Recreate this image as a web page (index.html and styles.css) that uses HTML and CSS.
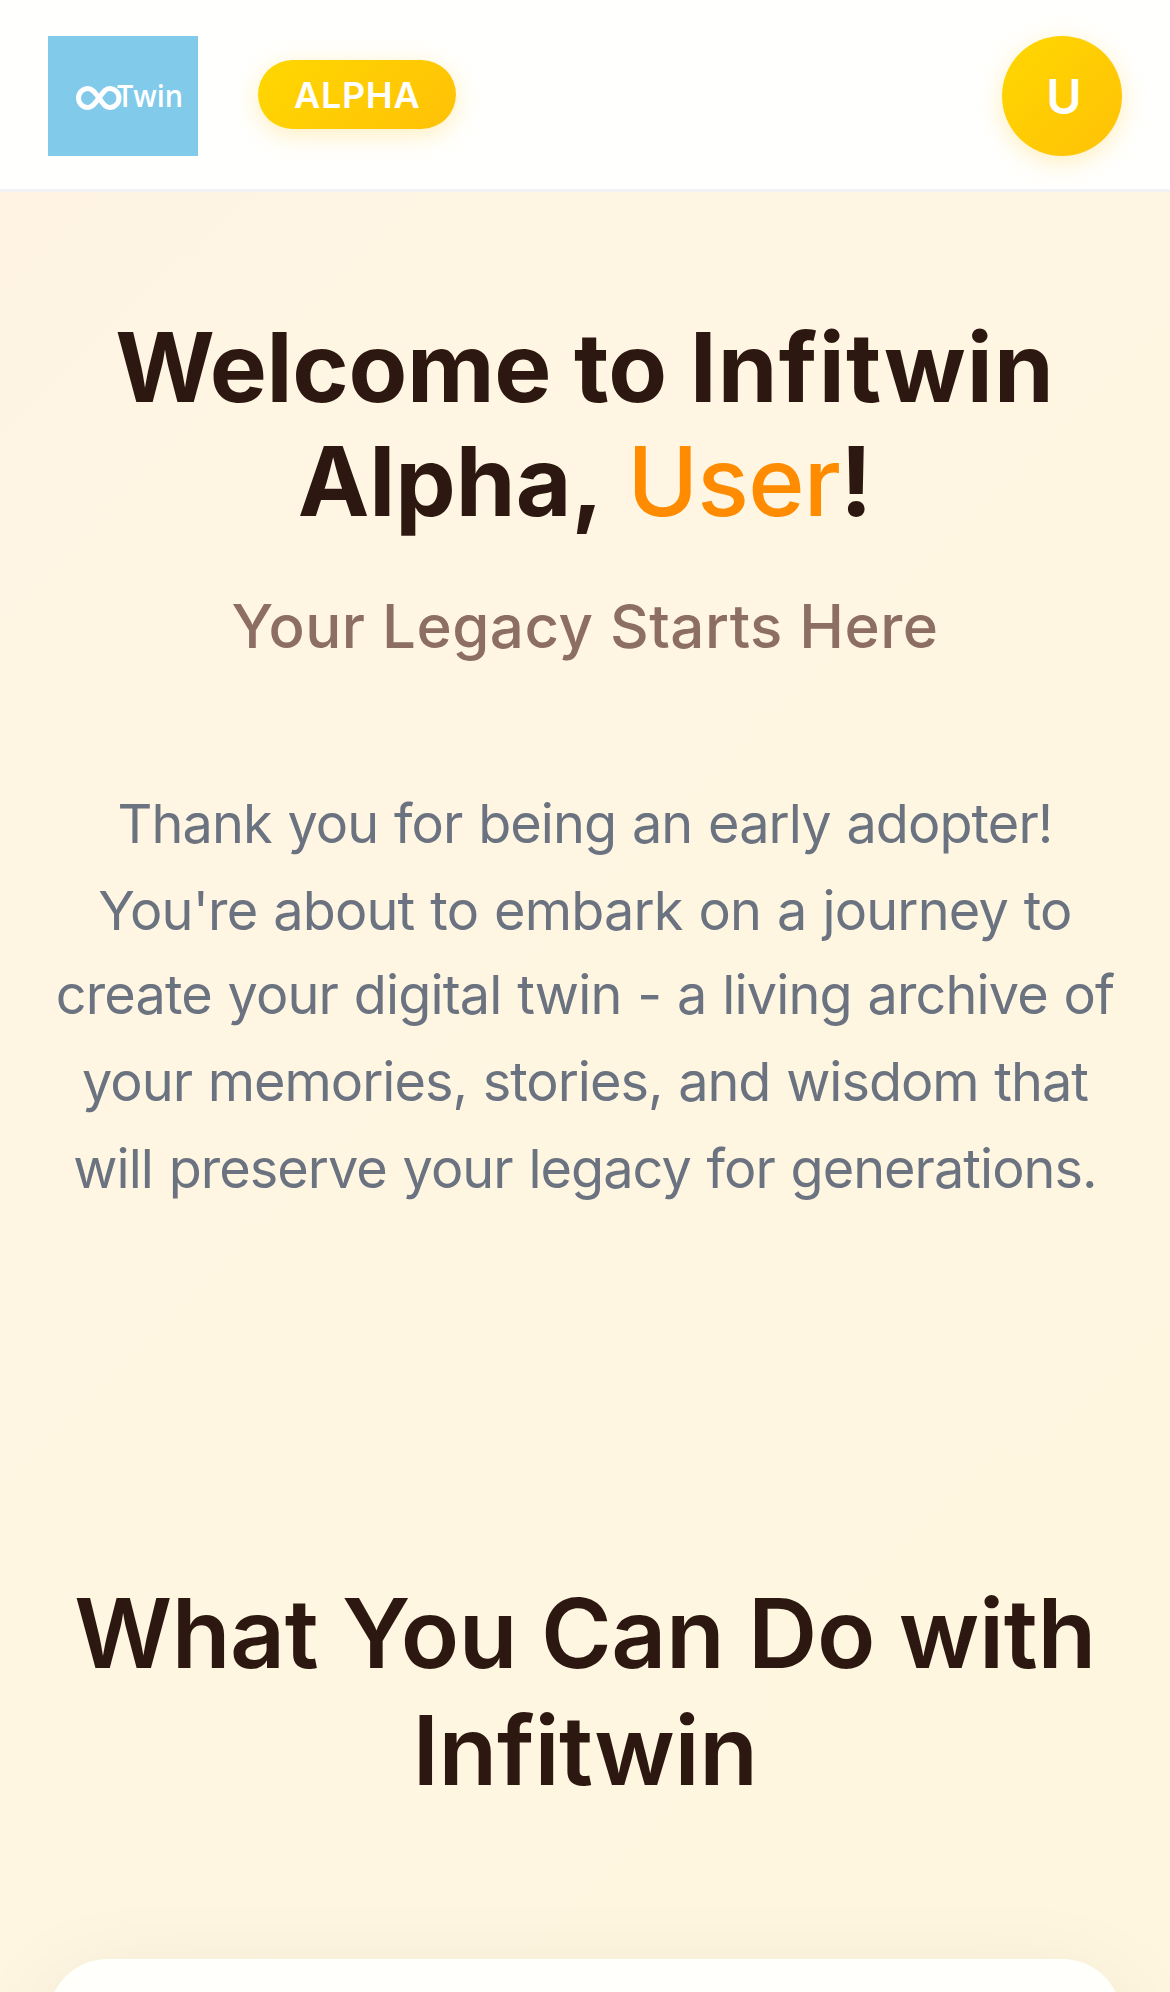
FILE: index.html
```html
<!DOCTYPE html>
<html lang="en">
<head>
<meta charset="utf-8">
<title>Infitwin Alpha</title>
<link rel="stylesheet" href="styles.css">
</head>
<body>
<header class="header">
  <div class="brand">
    <svg class="logo" viewBox="0 0 150 120" role="img" aria-label="Infitwin logo">
      <rect width="150" height="120" fill="#82caea"/>
      <path d="M51 62 C46 55 43.500 52.500 40 52.500 A9.500 9.500 0 0 0 40 71.500 C43.500 71.500 46 69 51 62 C56 55 58 52.500 61.500 52.500 A9.500 9.500 0 0 1 61.500 71.500 C58 71.500 56 69 51 62 Z" fill="none" stroke="#fff" stroke-width="5"/>
      <text class="logo-text" x="69" y="71" textLength="66" lengthAdjust="spacingAndGlyphs">Twin</text>
    </svg>
    <span class="badge">ALPHA</span>
  </div>
  <div class="avatar">U</div>
</header>
<main>
  <section class="hero">
    <h1 class="title"><span class="tight">Welcome</span> to <span class="wide">Infitwin</span><br>Alpha, <span class="name">User</span>!</h1>
    <p class="subtitle">Your Legacy Starts Here</p>
    <p class="intro">
      <span class="line line-1">Thank you for being an early adopter!</span>
      <span class="line line-2">You're about to embark on a journey to</span>
      <span class="line line-3">create your digital twin - a living archive of</span>
      <span class="line line-4">your memories, stories, and wisdom that</span>
      <span class="line line-5">will preserve your legacy for generations.</span>
    </p>
  </section>
  <section class="features">
    <h2 class="heading">What You Can Do with<br>Infitwin</h2>
    <div class="card"></div>
  </section>
</main>
</body>
</html>
```

FILE: styles.css
```css
* { box-sizing: border-box; }
body {
  display: flex;
  flex-direction: column;
  margin: 0;
  height: 1992px;
  overflow: hidden;
  font-family: Inter, "Liberation Sans", sans-serif;
  background: linear-gradient(135deg, #fff4e5 0%, #fff5e3 20%, #fff6e2 50%, #fff6df 100%);
  color: #2c1810;
}
.header {
  display: flex;
  flex: none;
  align-items: flex-start;
  justify-content: space-between;
  height: 192px;
  padding: 36px 48px 0;
  background: #fffffd;
  border-bottom: 3px solid #f1f2f6;
}
.brand { display: flex; align-items: flex-start; gap: 60px; }
.logo { display: block; width: 150px; height: 120px; }
.logo-text { font-family: "Open Sans", sans-serif; font-size: 31px; font-weight: 600; fill: #fff; }
.badge {
  height: 69px;
  margin-top: 24px;
  padding: 0 36px;
  border-radius: 36px;
  background: linear-gradient(135deg, #ffd700, #ffc107);
  box-shadow: 0 6px 24px rgba(255, 193, 7, .25);
  color: #fff;
  font-size: 36px;
  font-weight: 600;
  line-height: 71px;
  letter-spacing: .7px;
}
.avatar {
  width: 120px;
  height: 120px;
  padding-left: 4px;
  border-radius: 50%;
  background: linear-gradient(135deg, #ffd700, #ffc107);
  box-shadow: 0 6px 24px rgba(255, 193, 7, .25);
  color: #fff;
  font-size: 48px;
  font-weight: 600;
  line-height: 121px;
  text-align: center;
}
.hero { padding: 118px 48px 0; text-align: center; }
.title { margin: 0; font-size: 96px; font-weight: 700; line-height: 114px; }
.tight { letter-spacing: -.3px; }
.wide { letter-spacing: 1.1px; }
.name { margin-left: 4px; color: #ff8c00; font-weight: 500; letter-spacing: -.9px; }
.subtitle {
  margin: 40px 0 0;
  color: #8d6e63;
  font-size: 60px;
  font-weight: 500;
  line-height: 96px;
  letter-spacing: .5px;
}
.intro { margin: 108px 0 0; color: #6b7280; font-size: 54px; line-height: 84px; word-spacing: 1.5px; }
.line { display: block; white-space: nowrap; }
.line-1 { letter-spacing: -.92px; }
.line-2 { padding-top: 3px; letter-spacing: -.82px; }
.line-3 { letter-spacing: -.87px; }
.line-4 { padding-top: 3px; letter-spacing: -1px; }
.line-5 { padding-top: 3px; letter-spacing: -.96px; }
.features {
  display: flex;
  flex-direction: column;
  height: 782px;
  padding: 364px 48px 0;
  overflow: hidden;
  text-align: center;
}
.heading { margin: 0; font-size: 96px; font-weight: 600; line-height: 117px; letter-spacing: -.4px; }
/* The card continues below the fold */
.card {
  flex: none;
  height: 600px;
  margin-top: 150px;
  border-radius: 60px;
  background: #fffffc;
  box-shadow: 0 24px 96px rgba(0, 0, 0, .08);
}
```
